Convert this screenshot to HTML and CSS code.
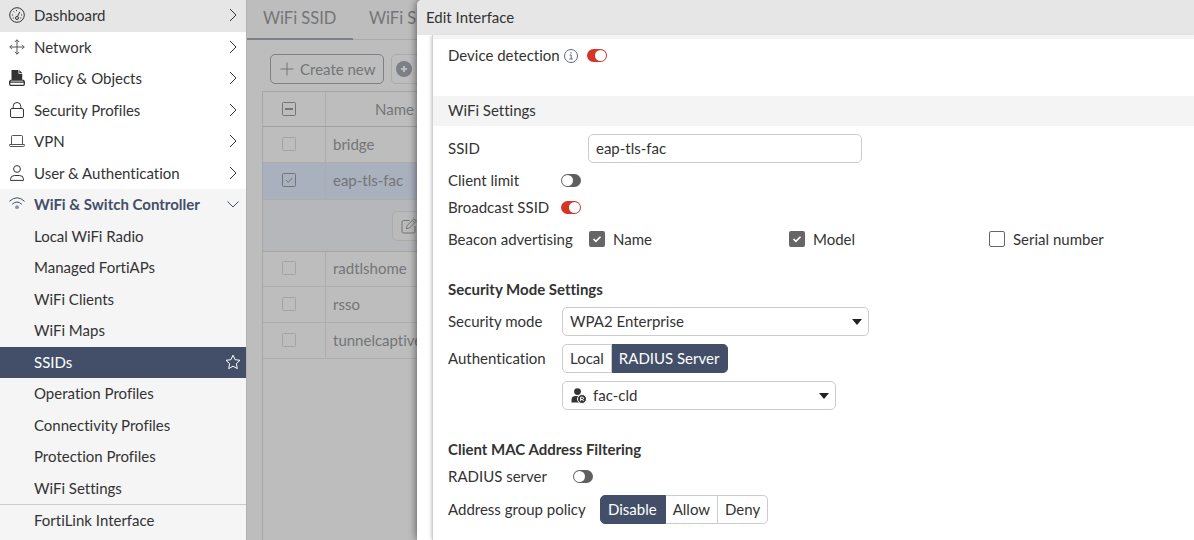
FILE: index.html
```html
<!DOCTYPE html>
<html lang="en">
<head>
  <meta charset="UTF-8" />
  <meta name="viewport" content="width=device-width, initial-scale=1.0"/>
  <title>Edit Interface</title>
  <link rel="stylesheet" href="styles.css">
</head>
<body>
  <nav class="sidebar">
    <a class="item hover">
      <svg class="icon" viewBox="0 0 16 16"><circle cx="8" cy="8" r="7.3"/><circle cx="8" cy="11" r="1.5"/><path d="M8.5 9.5L10.8 4.8M3 8h1M12 8h1M4.5 4.5l.7.7M7.5 3v1M3.8 11h1M11.3 11h1"/></svg>
      <span>Dashboard</span>
      <svg class="arrow" viewBox="0 0 14 14"><path d="M4 1l6 6-6 6"/></svg>
    </a>
    <a class="item">
      <svg class="icon light" viewBox="0 0 16 16"><path d="M8 .8v14.4M.8 8h14.4M5.8 3L8 .8 10.2 3M5.8 13L8 15.2l2.2-2.2M3 5.8L.8 8 3 10.2M13 5.8L15.2 8 13 10.2"/></svg>
      <span>Network</span>
      <svg class="arrow" viewBox="0 0 14 14"><path d="M4 1l6 6-6 6"/></svg>
    </a>
    <a class="item">
      <svg class="icon" viewBox="0 0 16 16"><path class="solid" d="M2.5 0h7v3.800h3.700v7H2.500z"/><path class="solid" d="M10.300 0l2.900 2.900h-2.900z"/><path d="M2.500 10.300H1.600l-.9 1.200v2.800q0 1 1 1h12.600q1 0 1-1v-2.800l-.9-1.200h-1.200M1 12.100h14" stroke-width="1.300"/></svg>
      <span>Policy &amp; Objects</span>
      <svg class="arrow" viewBox="0 0 14 14"><path d="M4 1l6 6-6 6"/></svg>
    </a>
    <a class="item">
      <svg class="icon" viewBox="0 0 16 16"><rect x="1.5" y="6.5" width="13" height="9" rx="1.5"/><path d="M4.2 6.5V4.3a3.8 3.8 0 0 1 7.6 0v2.2"/></svg>
      <span>Security Profiles</span>
      <svg class="arrow" viewBox="0 0 14 14"><path d="M4 1l6 6-6 6"/></svg>
    </a>
    <a class="item">
      <svg class="icon light" viewBox="0 0 16 16"><path d="M2.5 11.500v-8q0-1 1-1h9q1 0 1 1v8M.6 11.500h14.800v1q0 1-1 1H1.600q-1 0-1-1z"/></svg>
      <span>VPN</span>
      <svg class="arrow" viewBox="0 0 14 14"><path d="M4 1l6 6-6 6"/></svg>
    </a>
    <a class="item">
      <svg class="icon" viewBox="0 0 16 16"><circle cx="8" cy="4" r="3.4"/><path d="M1.5 15.400v-1.200q0-3.700 4-3.700h5q4 0 4 3.700v1.200z"/></svg>
      <span>User &amp; Authentication</span>
      <svg class="arrow" viewBox="0 0 14 14"><path d="M4 1l6 6-6 6"/></svg>
    </a>
    <div class="group">
      <a class="item open">
        <svg class="icon" viewBox="0 0 16 16"><path d="M.4 5.300Q8-1.700 15.600 5.300M3.200 8.200Q8 3.900 12.800 8.200"/><circle class="dot" cx="8" cy="11.200" r="1.900"/></svg>
        <span>WiFi &amp; Switch Controller</span>
        <svg class="arrow" viewBox="0 0 14 14"><path d="M1.500 4.500L7 10l5.500-5.500"/></svg>
      </a>
      <a class="item sub">Local WiFi Radio</a>
      <a class="item sub">Managed FortiAPs</a>
      <a class="item sub">WiFi Clients</a>
      <a class="item sub">WiFi Maps</a>
      <a class="item sub active">
        <span>SSIDs</span>
        <svg class="star" viewBox="0 0 16 16"><path d="M8 1.200l2.100 4.500 4.900.6-3.600 3.400.9 4.900L8 12.200l-4.300 2.400.9-4.900L1 6.300l4.900-.6z"/></svg>
      </a>
      <a class="item sub">Operation Profiles</a>
      <a class="item sub">Connectivity Profiles</a>
      <a class="item sub">Protection Profiles</a>
      <a class="item sub">WiFi Settings</a>
      <a class="item sub divided">FortiLink Interface</a>
    </div>
  </nav>

  <main class="page">
    <div class="tabs">
      <a class="tab current">WiFi SSID</a>
      <a class="tab">WiFi S</a>
    </div>
    <div class="toolbar">
      <button class="create">
        <svg viewBox="0 0 14 14"><path d="M7 .5v13M.5 7h13"/></svg>
        Create new
      </button>
      <button class="add">
        <svg viewBox="0 0 16 16"><circle cx="8" cy="8" r="8"/><path d="M8 5v6M5 8h6"/></svg>
      </button>
    </div>
    <div class="table">
      <div class="tr head">
        <div class="cell"><svg class="box" viewBox="0 0 14 14"><rect x=".5" y=".5" width="13" height="13" rx="1"/><path d="M3 7h8" stroke-width="2"/></svg></div>
        <div class="cell">Name</div>
      </div>
      <div class="tr">
        <div class="cell"><svg class="box faint" viewBox="0 0 14 14"><rect x=".5" y=".5" width="13" height="13" rx="1"/></svg></div>
        <div class="cell">bridge</div>
      </div>
      <div class="tr selected">
        <div class="cell"><svg class="box" viewBox="0 0 14 14"><rect x=".5" y=".5" width="13" height="13" rx="1"/><path d="M4 7l2.300 2.300L10.300 5"/></svg></div>
        <div class="cell">eap-tls-fac</div>
      </div>
      <div class="actions">
        <button class="edit">
          <svg viewBox="0 0 16 16"><path d="M8.500 2.500H2.500q-1.500 0-1.500 1.500v9.500q0 1.500 1.500 1.500h10q1.500 0 1.500-1.500V8M5.300 10.800l.8-3.200L13 .8l2.300 2.300-6.800 6.900zM11.300 2.500l2.300 2.300"/></svg>
        </button>
      </div>
      <div class="tr after">
        <div class="cell"><svg class="box faint" viewBox="0 0 14 14"><rect x=".5" y=".5" width="13" height="13" rx="1"/></svg></div>
        <div class="cell">radtlshome</div>
      </div>
      <div class="tr">
        <div class="cell"><svg class="box faint" viewBox="0 0 14 14"><rect x=".5" y=".5" width="13" height="13" rx="1"/></svg></div>
        <div class="cell">rsso</div>
      </div>
      <div class="tr">
        <div class="cell"><svg class="box faint" viewBox="0 0 14 14"><rect x=".5" y=".5" width="13" height="13" rx="1"/></svg></div>
        <div class="cell">tunnelcaptive</div>
      </div>
    </div>
  </main>

  <section class="drawer">
    <header class="drawer-title">Edit Interface</header>
    <form class="panel">
      <div class="row device">
        <label>Device detection</label>
        <svg class="info" viewBox="0 0 14 14"><circle cx="7" cy="7" r="6.500"/><path d="M5.600 6h1.600v4M5.400 10h3.400"/><path d="M6.400 3.900h1.200" stroke-width="1.300"/></svg>
        <span class="toggle on"></span>
      </div>
      <h2>WiFi Settings</h2>
      <div class="row ssid">
        <label>SSID</label>
        <input type="text" value="eap-tls-fac" />
      </div>
      <div class="row short">
        <label>Client limit</label>
        <span class="toggle"></span>
      </div>
      <div class="row short">
        <label>Broadcast SSID</label>
        <span class="toggle on"></span>
      </div>
      <div class="row beacon">
        <label>Beacon advertising</label>
        <span class="option"><svg class="check" viewBox="0 0 16 16"><rect x="0" y="0" width="16" height="16" rx="2"/><path d="M4.500 8l2.400 2.300L11.500 5.700"/></svg><span>Name</span></span>
        <span class="option"><svg class="check" viewBox="0 0 16 16"><rect x="0" y="0" width="16" height="16" rx="2"/><path d="M4.500 8l2.400 2.300L11.500 5.700"/></svg><span>Model</span></span>
        <span class="option"><svg class="check empty" viewBox="0 0 16 16"><rect x=".5" y=".5" width="15" height="15" rx="1.500"/></svg><span>Serial number</span></span>
      </div>

      <h3>Security Mode Settings</h3>
      <div class="row">
        <label>Security mode</label>
        <div class="select wide"><span>WPA2 Enterprise</span><i class="caret"></i></div>
      </div>
      <div class="row">
        <label>Authentication</label>
        <div class="buttons">
          <button type="button">Local</button>
          <button type="button" class="picked">RADIUS Server</button>
        </div>
      </div>
      <div class="row">
        <label></label>
        <div class="select">
          <svg class="server" viewBox="0 0 16 16"><circle cx="6.500" cy="3.600" r="3.400"/><path d="M.5 14.500v-2.500q0-4 4-4h4q2 0 3 1v5.500z"/><circle class="ring" cx="11" cy="11" r="4.500"/><path class="mark" d="M9.600 13.200V9.200h1.700q1.300 0 1.300 1.100t-1.300 1.100H9.600m1.700 0l1.400 1.800"/></svg>
          <span>fac-cld</span><i class="caret"></i>
        </div>
      </div>

      <h3 class="mac">Client MAC Address Filtering</h3>
      <div class="row short radius">
        <label>RADIUS server</label>
        <span class="toggle"></span>
      </div>
      <div class="row policy">
        <label>Address group policy</label>
        <div class="buttons">
          <button type="button" class="picked">Disable</button>
          <button type="button">Allow</button>
          <button type="button">Deny</button>
        </div>
      </div>
    </form>
  </section>
</body>
</html>
```
FILE: styles.css
```css
* {
  box-sizing: border-box;
}

body {
  margin: 0;
  height: 540px;
  display: flex;
  position: relative;
  overflow: hidden;
  font: 15px/20px Lato, sans-serif;
  font-variant-ligatures: none;
  color: #333;
}

svg {
  fill: none;
  stroke: currentColor;
  flex: none;
}

button, input {
  font: inherit;
  color: inherit;
}

/* sidebar */
.sidebar {
  width: 246px;
  flex: none;
  background: #fff;
}

.item {
  display: flex;
  align-items: center;
  height: 31.5px;
  padding: 0 6px 1px 9px;
}

.item.hover {
  background: #e6e6e6;
}

.icon {
  width: 16px;
  height: 16px;
  margin-right: 9px;
}

.icon.light {
  color: #555;
}

.icon .solid {
  fill: #333;
  stroke: none;
}

.icon .dot {
  fill: #8d95a5;
  stroke: none;
}

.arrow {
  width: 14px;
  height: 14px;
  margin-left: auto;
}

.group {
  background: #f5f5f5;
}

.item.open {
  color: #434f68;
  font-weight: bold;
}

.item.sub {
  padding-left: 34px;
}

.item.active {
  padding-right: 5px;
  background: #434f68;
  color: #fff;
}

.star {
  width: 16px;
  height: 16px;
  margin-left: auto;
}

.item.divided {
  height: 36px;
  padding-bottom: 5px;
  border-top: 1px solid #ccc;
}

/* dimmed list page */
.page {
  flex: 1;
  display: flex;
  flex-direction: column;
  background: #bdbdbd;
  border-left: 1px solid #b2b2b2;
  color: #737577;
}

.tabs {
  display: flex;
  height: 40px;
  border-bottom: 1px solid #aaa;
  font-size: 16.5px;
}

.tab {
  height: 40px;
  padding: 8px 16px 0;
  white-space: nowrap;
}

.tab.current {
  width: 106px;
  border-bottom: 2px solid #7c8087;
}

.toolbar {
  display: flex;
  gap: 7px;
  padding: 14px 0 7px 23px;
}

.toolbar button {
  display: flex;
  align-items: center;
  height: 30px;
  background: none;
  border: 1px solid #7c8087;
  border-radius: 5px;
}

.create {
  width: 114px;
  padding: 0 0 0 9px;
  gap: 6px;
  white-space: nowrap;
}

.create svg {
  width: 14px;
  height: 14px;
}

.toolbar .add {
  width: 130px;
  padding: 0 4px;
  border-color: #ababab;
}

.add svg {
  width: 16px;
  height: 16px;
  fill: #7c8087;
  stroke: none;
}

.add svg path {
  stroke: #bdbdbd;
  stroke-width: 2;
}

.table {
  flex: 1;
  margin-left: 15px;
  border: solid #a6a6a6;
  border-width: 1px 0 0 1px;
}

.tr {
  display: flex;
  height: 36px;
  border-bottom: 1px solid #adadad;
}

.tr.head {
  height: 35px;
  border-color: #a0a0a0;
}

.cell {
  display: flex;
  align-items: center;
  padding: 0 0 1px 7px;
}

.cell:first-child {
  width: 63px;
  padding-left: 19px;
  border-right: 1px solid #adadad;
}

.head .cell {
  padding-bottom: 0;
}

.head .cell:last-child {
  padding-left: 49px;
}

.box {
  width: 14px;
  height: 14px;
}

.box.faint {
  color: #a3a3a3;
}

.tr.selected {
  height: 37px;
  background: #a9b0be;
}

.tr.after {
  height: 35px;
}

.selected .cell, .after .cell {
  padding-bottom: 2px;
}

.actions {
  height: 52px;
  padding: 11px 0 0 129px;
  background: #b5b7bb;
  border-bottom: 1px solid #a4a4a4;
}

.edit {
  width: 100px;
  height: 30px;
  padding: 0 8px;
  text-align: left;
  background: #bababa;
  border: 1px solid #ababab;
  border-radius: 5px;
}

.edit svg {
  display: block;
  width: 16px;
  height: 16px;
}

/* drawer slides over the page */
.drawer {
  position: absolute;
  top: 0;
  left: 417px;
  right: 0;
  height: 540px;
  background: #fff;
  border-top-left-radius: 5px;
  box-shadow: 0 0 9px rgba(0, 0, 0, .6);
}

.drawer-title {
  height: 35px;
  padding: 7px 9px;
  background: #e6e6e6;
  border-top-left-radius: 5px;
}

.panel {
  height: 505px;
  margin-left: 15px;
  padding-top: 4px;
  border-left: 1px solid #d0d0d0;
  box-shadow: -2px 0 3px -1px #ccc, inset 0 4px #f4f4f4;
}

.row {
  display: flex;
  align-items: center;
  height: 29px;
  margin: 0 0 8px 15px;
}

.row label {
  width: 114px;
  padding-bottom: 2px;
  white-space: nowrap;
}

.row.device {
  height: 27px;
  margin: 3px 0 27px 15px;
}

.row.device label {
  width: 112px;
}

.info {
  width: 14px;
  height: 14px;
  margin: 0 9px 0 4px;
  color: #5c6683;
}

h2 {
  margin: 0 0 8px;
  padding: 4px 15px 6px;
  font-size: 15px;
  font-weight: normal;
  background: #f4f4f4;
}

.row.ssid {
  margin-bottom: 4px;
}

.row.ssid label {
  width: 140px;
}

.ssid input {
  width: 274px;
  height: 29px;
  padding: 0 7px 2px;
  border: 1px solid #ccc;
  border-radius: 5px;
}

.row.short {
  height: 27px;
  margin-bottom: 0;
}

.row.short label {
  width: 113px;
}

.toggle {
  width: 20px;
  height: 13px;
  padding: 1px;
  border-radius: 7px;
  background: #5f5f5f;
}

.toggle::before {
  content: "";
  display: block;
  width: 11px;
  height: 11px;
  border-radius: 50%;
  background: #fff;
}

.toggle.on {
  background: #d43527;
}

.toggle.on::before {
  margin-left: 7px;
}

.row.beacon {
  margin-top: 4px;
  margin-bottom: 25px;
}

.row.beacon label {
  width: 141px;
}

.option {
  display: flex;
  align-items: center;
  gap: 8px;
  width: 200px;
}

.option span, .select span {
  padding-bottom: 2px;
}

.check {
  width: 16px;
  height: 16px;
  margin-bottom: 1px;
  fill: #666;
  stroke: none;
}

.check path {
  fill: none;
  stroke: #fff;
  stroke-width: 1.6;
}

.check.empty {
  fill: #fff;
  stroke: #666;
}

h3 {
  margin: 0 0 7px 15px;
  font-size: 15px;
  line-height: 21px;
}

h3.mac {
  margin-top: 29px;
  margin-bottom: 3px;
}

.select {
  display: flex;
  align-items: center;
  width: 274px;
  height: 29px;
  padding: 0 6px 0 7px;
  border: 1px solid #ccc;
  border-radius: 5px;
}

.select.wide {
  width: 307px;
}

.caret {
  margin-left: auto;
  border: 5px solid transparent;
  border-top: 6px solid #222;
  border-bottom: 0;
}

.server {
  width: 16px;
  height: 16px;
  margin: 0 6px 0 1px;
  fill: #333;
  stroke: none;
}

.server .ring {
  stroke: #fff;
}

.server .mark {
  fill: none;
  stroke: #fff;
}

.buttons {
  display: flex;
}

.buttons button {
  height: 29px;
  padding: 0 7px 2px;
  background: #fff;
  border: 1px solid #ccc;
  border-left-width: 0;
}

.buttons button:first-child {
  border-left-width: 1px;
  border-radius: 5px 0 0 5px;
}

.buttons button:last-child {
  border-radius: 0 5px 5px 0;
}

.buttons .picked {
  padding-right: 8px;
  background: #434f68;
  border-color: #434f68;
  color: #fff;
}

.row.radius label {
  width: 125px;
}

.row.policy {
  margin-top: 5px;
}

.row.policy label {
  width: 152px;
}
```
